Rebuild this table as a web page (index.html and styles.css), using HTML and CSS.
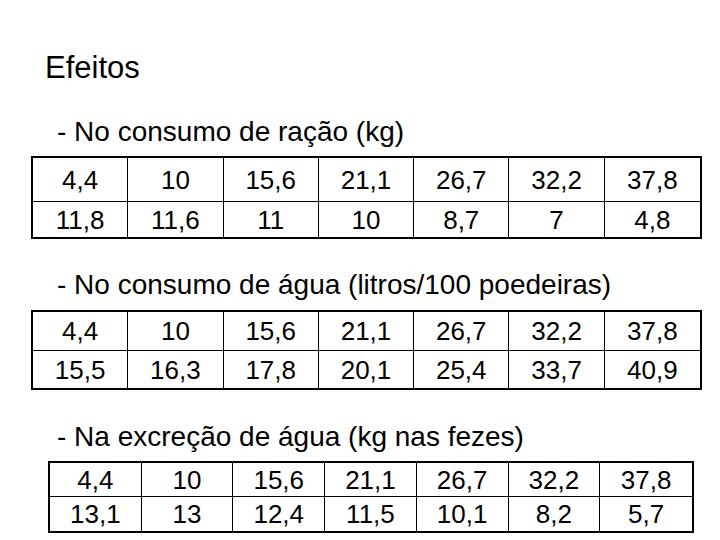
FILE: index.html
```html
<!DOCTYPE html>
<html lang="pt">
<head>
<meta charset="utf-8">
<title>Efeitos</title>
<link rel="stylesheet" href="styles.css">
</head>
<body>
<div class="slide">
  <h1 class="title">Efeitos</h1>

  <p class="sub sub-1">- No consumo de ração (kg)</p>
  <table class="grid grid-1">
    <tr class="r1"><td>4,4</td><td>10</td><td>15,6</td><td>21,1</td><td>26,7</td><td>32,2</td><td>37,8</td></tr>
    <tr class="r2"><td>11,8</td><td>11,6</td><td>11</td><td>10</td><td>8,7</td><td>7</td><td>4,8</td></tr>
  </table>

  <p class="sub sub-2">- No consumo de água (litros/100 poedeiras)</p>
  <table class="grid grid-2">
    <tr class="r1"><td>4,4</td><td>10</td><td>15,6</td><td>21,1</td><td>26,7</td><td>32,2</td><td>37,8</td></tr>
    <tr class="r2"><td>15,5</td><td>16,3</td><td>17,8</td><td>20,1</td><td>25,4</td><td>33,7</td><td>40,9</td></tr>
  </table>

  <p class="sub sub-3">- Na excreção de água (kg nas fezes)</p>
  <table class="grid grid-3">
    <tr class="r1"><td>4,4</td><td>10</td><td>15,6</td><td>21,1</td><td>26,7</td><td>32,2</td><td>37,8</td></tr>
    <tr class="r2"><td>13,1</td><td>13</td><td>12,4</td><td>11,5</td><td>10,1</td><td>8,2</td><td>5,7</td></tr>
  </table>
</div>
</body>
</html>
```

FILE: styles.css
```css
html, body {
  margin: 0;
  padding: 0;
  background: #fff;
}

.slide {
  width: 720px;
  height: 540px;
  overflow: hidden;
  font-family: "Liberation Sans", Arial, sans-serif;
  color: #000;
}

.title {
  margin: 52px 0 0 45px;
  font-size: 31px;
  line-height: 31px;
  font-weight: normal;
}

.sub {
  margin: 0 0 0 57px;
  font-size: 28px;
  line-height: 28px;
  white-space: nowrap;
}

.sub-1 { margin-top: 35px; margin-bottom: 10px; }
.sub-2 { margin-top: 32px; margin-bottom: 11px; }
.sub-3 { margin-top: 33px; margin-bottom: 10px; }

.grid {
  border-collapse: separate;
  border-spacing: 0;
  table-layout: fixed;
  border: 2px solid #000;
  box-sizing: border-box;
  font-size: 26px;
}

.grid td {
  padding: 0;
  text-align: center;
  vertical-align: middle;
  border-right: 1px solid #000;
  border-bottom: 1px solid #000;
  line-height: 26px;
}

.grid td:last-child { border-right: 0; }
.grid tr:last-child td { border-bottom: 0; }

.grid-1, .grid-2 {
  margin-left: 31px;
  width: 671px;
}

.grid-3 {
  margin-left: 48px;
  width: 646px;
}

.grid-1 .r1 td { height: 43px; }
.grid-1 .r2 td { height: 35px; }
.grid-2 .r1 td { height: 38px; }
.grid-2 .r2 td { height: 37px; }
.grid-3 .r1 td { height: 33px; }
.grid-3 .r2 td { height: 34px; }
```
